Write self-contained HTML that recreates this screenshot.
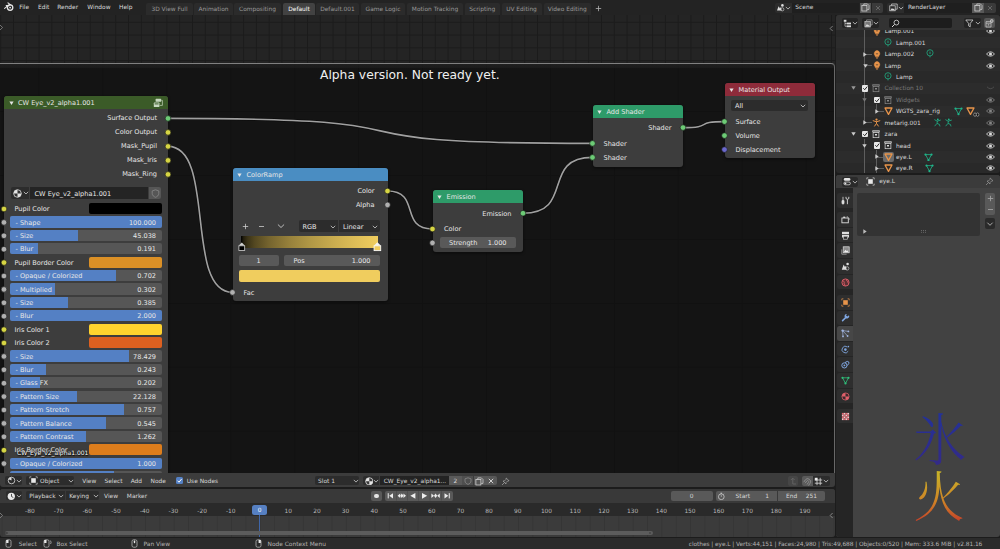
<!DOCTYPE html><html><head><meta charset='utf-8'><title>Blender</title><style>
html,body{margin:0;padding:0;background:#1c1c1c;}
body{width:1000px;height:549px;overflow:hidden;position:relative;font-family:"DejaVu Sans","Liberation Sans",sans-serif;font-size:5.9px;color:#d8d8d8;line-height:1;}
.a{position:absolute;white-space:nowrap;}
.t{position:absolute;white-space:nowrap;}
.tr{position:absolute;white-space:nowrap;transform:translateX(-100%);}
.tc{position:absolute;white-space:nowrap;transform:translateX(-50%);}
.node{position:absolute;border-radius:3px;background:#3d3d3d;box-shadow:0 0 0 0.6px #111,0 1px 3px rgba(0,0,0,.6);font-size:6.55px;color:#e6e6e6;}
.node .hd{position:absolute;left:0;top:0;right:0;height:13px;border-radius:3px 3px 0 0;}
.sock{position:absolute;width:5.6px;height:5.6px;border-radius:50%;transform:translate(-50%,-50%);box-shadow:0 0 0 0.5px #1a1a1a;}
.fld{position:absolute;border-radius:2px;background:#595959;}
.sl{position:absolute;border-radius:2px;background:#565656;overflow:hidden;}
.sl i{position:absolute;left:0;top:0;bottom:0;background:#5480c4;display:block;}
.sw{position:absolute;border-radius:2px;}
.dd{position:absolute;border-radius:2px;background:#2c2c2c;}
</style></head><body>
<div class='a' style='left:0;top:0;width:1000px;height:15px;background:#232323'></div>
<svg class='a' style='left:4.4px;top:2.4px' width='10' height='10' viewBox='0 0 10 10'><circle cx='6.1' cy='5.6' r='2.7' fill='none' stroke='#e6e6e6' stroke-width='1.3'/><circle cx='6.1' cy='5.6' r='0.9' fill='#e6e6e6'/><path d='M0.6 6.4 L5.4 2.6 M2.2 3.6 H5.2 M4 0.9 L6.6 2.9' stroke='#e6e6e6' stroke-width='1.1' stroke-linecap='round' fill='none'/></svg>
<div class='t' style='left:19.2px;top:5.00px;color:#dcdcdc'>File</div>
<div class='t' style='left:38px;top:5.00px;color:#dcdcdc'>Edit</div>
<div class='t' style='left:57.2px;top:5.00px;color:#dcdcdc'>Render</div>
<div class='t' style='left:87.3px;top:5.00px;color:#dcdcdc'>Window</div>
<div class='t' style='left:119px;top:5.00px;color:#dcdcdc'>Help</div>
<div class='a' style='left:146px;top:3px;width:47px;height:12px;background:#2b2b2b;border-radius:2px 2px 0 0'></div>
<div class='tc' style='left:169.5px;top:7.00px;color:#9a9a9a'>3D View Full</div>
<div class='a' style='left:194px;top:3px;width:39px;height:12px;background:#2b2b2b;border-radius:2px 2px 0 0'></div>
<div class='tc' style='left:213.5px;top:7.00px;color:#9a9a9a'>Animation</div>
<div class='a' style='left:234px;top:3px;width:47px;height:12px;background:#2b2b2b;border-radius:2px 2px 0 0'></div>
<div class='tc' style='left:257.5px;top:7.00px;color:#9a9a9a'>Compositing</div>
<div class='a' style='left:283px;top:3px;width:32px;height:12px;background:#424242;border-radius:2px 2px 0 0'></div>
<div class='tc' style='left:299.0px;top:7.00px;color:#ffffff'>Default</div>
<div class='a' style='left:316px;top:3px;width:43px;height:12px;background:#2b2b2b;border-radius:2px 2px 0 0'></div>
<div class='tc' style='left:337.5px;top:7.00px;color:#9a9a9a'>Default.001</div>
<div class='a' style='left:361px;top:3px;width:44px;height:12px;background:#2b2b2b;border-radius:2px 2px 0 0'></div>
<div class='tc' style='left:383.0px;top:7.00px;color:#9a9a9a'>Game Logic</div>
<div class='a' style='left:407px;top:3px;width:56px;height:12px;background:#2b2b2b;border-radius:2px 2px 0 0'></div>
<div class='tc' style='left:435.0px;top:7.00px;color:#9a9a9a'>Motion Tracking</div>
<div class='a' style='left:465px;top:3px;width:34.5px;height:12px;background:#2b2b2b;border-radius:2px 2px 0 0'></div>
<div class='tc' style='left:482.25px;top:7.00px;color:#9a9a9a'>Scripting</div>
<div class='a' style='left:501.5px;top:3px;width:40.0px;height:12px;background:#2b2b2b;border-radius:2px 2px 0 0'></div>
<div class='tc' style='left:521.5px;top:7.00px;color:#9a9a9a'>UV Editing</div>
<div class='a' style='left:543.5px;top:3px;width:47.5px;height:12px;background:#2b2b2b;border-radius:2px 2px 0 0'></div>
<div class='tc' style='left:567.25px;top:7.00px;color:#9a9a9a'>Video Editing</div>
<svg class='a' style='left:594.5px;top:5px' width='7' height='7' viewBox='0 0 7 7'><path d='M3.5 0.8 V6.2 M0.8 3.5 H6.2' stroke='#b0b0b0' stroke-width='0.8'/></svg>
<div class='a' style='left:0;top:15px;width:835px;height:458.3px;overflow:hidden;background-color:#242424;background-image:linear-gradient(to right,#1b1b1b 1px,transparent 1px),linear-gradient(to bottom,#1b1b1b 1px,transparent 1px);background-size:12.79px 12.79px;background-position:0.26px 6.8px'>
<div class='a' style='left:-6px;top:48.1px;width:838.7px;height:460px;border:1.2px solid #808080;border-right:1.4px solid #686868;border-radius:4px;background-color:#141414;background-image:linear-gradient(to bottom,rgba(40,40,40,0.55) 0,rgba(36,36,36,0.45) 3.6px,rgba(20,20,20,0) 4.6px),linear-gradient(to right,#111 1px,transparent 1px),linear-gradient(to bottom,#111 1px,transparent 1px);background-size:100% 100%,63.95px 63.95px,63.95px 63.95px;background-position:0 0,43.45px 47.05px,43.45px 47.05px'></div>
<div class='tc' style='left:409.8px;top:54.00px;font-size:12.3px;color:#f0f0f0'>Alpha version. Not ready yet.</div>
</div>
<svg class='a' style='left:0;top:0' width='1000' height='549' viewBox='0 0 1000 549'>
<path d='M168 118.4 C486.375 118.4 274.125 143.4 592.5 143.4' stroke='#0c0c0c' stroke-width='2.8' fill='none'/><path d='M168 118.4 C486.375 118.4 274.125 143.4 592.5 143.4' stroke='#a0a0a0' stroke-width='1.6' fill='none'/>
<path d='M168 146.4 C216.375 146.4 184.125 292.4 232.5 292.4' stroke='#0c0c0c' stroke-width='2.8' fill='none'/><path d='M168 146.4 C216.375 146.4 184.125 292.4 232.5 292.4' stroke='#a0a0a0' stroke-width='1.6' fill='none'/>
<path d='M387.5 191.0 C421.25 191.0 398.75 229.0 432.5 229.0' stroke='#0c0c0c' stroke-width='2.8' fill='none'/><path d='M387.5 191.0 C421.25 191.0 398.75 229.0 432.5 229.0' stroke='#a0a0a0' stroke-width='1.6' fill='none'/>
<path d='M523 213.20000000000002 C575.125 213.20000000000002 540.375 157.4 592.5 157.4' stroke='#0c0c0c' stroke-width='2.8' fill='none'/><path d='M523 213.20000000000002 C575.125 213.20000000000002 540.375 157.4 592.5 157.4' stroke='#a0a0a0' stroke-width='1.6' fill='none'/>
<path d='M683 127.60000000000001 C714.125 127.60000000000001 693.375 121.60000000000001 724.5 121.60000000000001' stroke='#0c0c0c' stroke-width='2.8' fill='none'/><path d='M683 127.60000000000001 C714.125 127.60000000000001 693.375 121.60000000000001 724.5 121.60000000000001' stroke='#a0a0a0' stroke-width='1.6' fill='none'/>
</svg>
<div class='node' style='left:4px;top:96px;width:164px;height:384px'><div class='hd' style='background:#3b5b28'></div><svg class='a' style='left:4.6px;top:4.6px' width='5' height='4.4' viewBox='0 0 5 4.4'><path d='M0.4 0.5 H4.6 L2.5 4 Z' fill='#e4e4e4'/></svg><div class='t' style='left:14px;top:4.00px;'>CW Eye_v2_alpha1.001</div>
<div class='tr' style='left:153px;top:19.00px;'>Surface Output</div>
<div class='tr' style='left:153px;top:33.00px;'>Color Output</div>
<div class='tr' style='left:153px;top:47.00px;'>Mask_Pupil</div>
<div class='tr' style='left:153px;top:61.00px;'>Mask_Iris</div>
<div class='tr' style='left:153px;top:75.00px;'>Mask_Ring</div>
<div class='dd' style='left:7.2px;top:91.4px;width:18.3px;height:11.6px;border-radius:2px 0 0 2px'></div>
<svg class='a' style='left:8.6px;top:92.7px' width='9' height='9' viewBox='0 0 9 9'><circle cx='4.5' cy='4.5' r='3.8' fill='#e4e4e4'/><path d='M4.5 4.5 L4.5 0.7 A3.8 3.8 0 0 1 8.3 4.5 Z' fill='#333'/><path d='M4.5 4.5 L0.7 4.5 A3.8 3.8 0 0 0 4.5 8.3 Z' fill='#333'/><circle cx='4.5' cy='4.5' r='3.8' fill='none' stroke='#e4e4e4' stroke-width='0.7'/></svg>
<svg class='a' style='left:17.5px;top:94.4px' width='8' height='6' viewBox='0 0 8 6'><path d='M1.8 1.8 L4 4 L6.2 1.8' stroke='#ccc' stroke-width='0.8' fill='none'/></svg>
<div class='dd' style='left:26px;top:91.4px;width:118.3px;height:11.6px;border-radius:0;background:#242424'></div>
<div class='t' style='left:30.5px;top:95.00px;'>CW Eye_v2_alpha1.001</div>
<div class='fld' style='left:144.8px;top:91.4px;width:12.5px;height:11.6px;border-radius:0 2px 2px 0;background:#565656'></div>
<svg class='a' style='left:146.6px;top:92.8px' width='9' height='9' viewBox='0 0 9 9'><path d='M4.5 0.8 L7.8 1.9 V4.4 C7.8 6.4 6.2 7.6 4.5 8.3 C2.8 7.6 1.2 6.4 1.2 4.4 V1.9 Z' fill='none' stroke='#8a8a8a' stroke-width='0.8'/></svg>
<svg class='a' style='left:149px;top:1.8px' width='10' height='10' viewBox='0 0 10 10'><rect x='2.6' y='0.8' width='5.6' height='3' rx='0.6' fill='#c8d8c0'/><rect x='0.8' y='4.6' width='5.6' height='4.4' rx='0.6' fill='#c8d8c0'/><path d='M8.4 2.4 H9.4 V7.4 H6.6' stroke='#c8d8c0' stroke-width='0.7' fill='none'/><rect x='1.6' y='5.4' width='4' height='1' fill='#3b5b28'/></svg>
<div class='t' style='left:10.5px;top:110.00px;'>Pupil Color</div>
<div class='sw' style='left:84.5px;top:107.0px;width:73px;height:11.2px;background:#000000'></div>
<div class='sl' style='left:6px;top:120.3px;width:152px;height:11.4px'><i style='width:152px'></i></div>
<div class='t' style='left:11.5px;top:124.00px;'>- Shape</div><div class='tr' style='left:152px;top:124.00px;'>100.000</div>
<div class='sl' style='left:6px;top:133.70000000000002px;width:152px;height:11.4px'><i style='width:67.5px'></i></div>
<div class='t' style='left:11.5px;top:137.00px;'>- Size</div><div class='tr' style='left:152px;top:137.00px;'>45.038</div>
<div class='sl' style='left:6px;top:147.10000000000002px;width:152px;height:11.4px'><i style='width:28px'></i></div>
<div class='t' style='left:11.5px;top:150.00px;'>- Blur</div><div class='tr' style='left:152px;top:150.00px;'>0.191</div>
<div class='t' style='left:10.5px;top:164.00px;'>Pupil Border Color</div>
<div class='sw' style='left:84.5px;top:160.6px;width:73px;height:11.2px;background:#db9026'></div>
<div class='sl' style='left:6px;top:173.9px;width:152px;height:11.4px'><i style='width:106px'></i></div>
<div class='t' style='left:11.5px;top:177.00px;'>- Opaque / Colorized</div><div class='tr' style='left:152px;top:177.00px;'>0.702</div>
<div class='sl' style='left:6px;top:187.3px;width:152px;height:11.4px'><i style='width:45px'></i></div>
<div class='t' style='left:11.5px;top:191.00px;'>- Multiplied</div><div class='tr' style='left:152px;top:191.00px;'>0.302</div>
<div class='sl' style='left:6px;top:200.7px;width:152px;height:11.4px'><i style='width:58px'></i></div>
<div class='t' style='left:11.5px;top:204.00px;'>- Size</div><div class='tr' style='left:152px;top:204.00px;'>0.385</div>
<div class='sl' style='left:6px;top:214.10000000000002px;width:152px;height:11.4px'><i style='width:152px'></i></div>
<div class='t' style='left:11.5px;top:217.00px;'>- Blur</div><div class='tr' style='left:152px;top:217.00px;'>2.000</div>
<div class='t' style='left:10.5px;top:231.00px;'>Iris Color 1</div>
<div class='sw' style='left:84.5px;top:227.6px;width:73px;height:11.2px;background:#ffd32e'></div>
<div class='t' style='left:10.5px;top:244.00px;'>Iris Color 2</div>
<div class='sw' style='left:84.5px;top:241.0px;width:73px;height:11.2px;background:#dd6020'></div>
<div class='sl' style='left:6px;top:254.3px;width:152px;height:11.4px'><i style='width:118.5px'></i></div>
<div class='t' style='left:11.5px;top:258.00px;'>- Size</div><div class='tr' style='left:152px;top:258.00px;'>78.429</div>
<div class='sl' style='left:6px;top:267.7px;width:152px;height:11.4px'><i style='width:35.8px'></i></div>
<div class='t' style='left:11.5px;top:271.00px;'>- Blur</div><div class='tr' style='left:152px;top:271.00px;'>0.243</div>
<div class='sl' style='left:6px;top:281.1px;width:152px;height:11.4px'><i style='width:30px'></i></div>
<div class='t' style='left:11.5px;top:284.00px;'>- Glass FX</div><div class='tr' style='left:152px;top:284.00px;'>0.202</div>
<div class='sl' style='left:6px;top:294.5px;width:152px;height:11.4px'><i style='width:66.5px'></i></div>
<div class='t' style='left:11.5px;top:298.00px;'>- Pattern Size</div><div class='tr' style='left:152px;top:298.00px;'>22.128</div>
<div class='sl' style='left:6px;top:307.90000000000003px;width:152px;height:11.4px'><i style='width:114px'></i></div>
<div class='t' style='left:11.5px;top:311.00px;'>- Pattern Stretch</div><div class='tr' style='left:152px;top:311.00px;'>0.757</div>
<div class='sl' style='left:6px;top:321.3px;width:152px;height:11.4px'><i style='width:95.8px'></i></div>
<div class='t' style='left:11.5px;top:325.00px;'>- Pattern Balance</div><div class='tr' style='left:152px;top:325.00px;'>0.545</div>
<div class='sl' style='left:6px;top:334.7px;width:152px;height:11.4px'><i style='width:75.8px'></i></div>
<div class='t' style='left:11.5px;top:338.00px;'>- Pattern Contrast</div><div class='tr' style='left:152px;top:338.00px;'>1.262</div>
<div class='t' style='left:10.5px;top:351.00px;'>Iris Border Color</div>
<div class='sw' style='left:84.5px;top:348.2px;width:73px;height:11.2px;background:#dd7d1c'></div>
<div class='sl' style='left:6px;top:361.5px;width:152px;height:11.4px'><i style='width:152px'></i></div>
<div class='t' style='left:11.5px;top:365.00px;'>- Opaque / Colorized</div><div class='tr' style='left:152px;top:365.00px;'>1.000</div>
<div class='sl' style='left:6px;top:374.90000000000003px;width:152px;height:11.4px'><i style='width:104px'></i></div>
<div class='t' style='left:11.5px;top:378.00px;'></div><div class='tr' style='left:152px;top:378.00px;'></div>
</div>
<div class='node' style='left:232.5px;top:168px;width:155.0px;height:132.5px'><div class='hd' style='background:#4a8dc2'></div><svg class='a' style='left:4.6px;top:4.6px' width='5' height='4.4' viewBox='0 0 5 4.4'><path d='M0.4 0.5 H4.6 L2.5 4 Z' fill='#e4e4e4'/></svg><div class='t' style='left:14px;top:4.00px;'>ColorRamp</div>
<div class='tr' style='left:142px;top:20.00px;'>Color</div><div class='tr' style='left:142px;top:34.00px;'>Alpha</div>
<svg class='a' style='left:9px;top:54.6px' width='7' height='7' viewBox='0 0 7 7'><path d='M3.5 0.8 V6.2 M0.8 3.5 H6.2' stroke='#ccc' stroke-width='0.8'/></svg><svg class='a' style='left:25.5px;top:54.6px' width='7' height='7' viewBox='0 0 7 7'><path d='M1 3.5 H6' stroke='#ccc' stroke-width='0.8'/></svg>
<svg class='a' style='left:44.5px;top:55.4px' width='8' height='6' viewBox='0 0 8 6'><path d='M0.9 1.5 L4 4.5 L7.1 1.5' stroke='#ccc' stroke-width='0.9' fill='none'/></svg>
<div class='dd' style='left:66px;top:52px;width:39.5px;height:12px;border-radius:2px 0 0 2px'></div><div class='dd' style='left:106px;top:52px;width:41.5px;height:12px;border-radius:0 2px 2px 0'></div>
<div class='t' style='left:70px;top:56.00px;'>RGB</div><div class='t' style='left:110.5px;top:56.00px;'>Linear</div>
<svg class='a' style='left:96px;top:55.5px' width='8' height='6' viewBox='0 0 8 6'><path d='M1.8 1.8 L4 4 L6.2 1.8' stroke='#ccc' stroke-width='0.8' fill='none'/></svg>
<svg class='a' style='left:138px;top:55.5px' width='8' height='6' viewBox='0 0 8 6'><path d='M1.8 1.8 L4 4 L6.2 1.8' stroke='#ccc' stroke-width='0.8' fill='none'/></svg>
<div class='a' style='left:8.5px;top:67.7px;width:137px;height:12.3px;background:linear-gradient(to right,rgb(0, 0, 0) 0%,rgb(36, 31, 14) 2%,rgb(59, 51, 23) 5%,rgb(84, 72, 33) 10%,rgb(116, 99, 46) 20%,rgb(150, 128, 59) 35%,rgb(176, 151, 69) 50%,rgb(205, 175, 80) 70%,rgb(223, 191, 88) 85%,rgb(240, 205, 94) 100%)'></div>
<svg class='a' style='left:5.5px;top:73.8px' width='146' height='10' viewBox='0 0 146 10'><path d='M0.6 3.8 L3.8 0.5 L7 3.8 Z' fill='#cfcfcf'/><rect x='0.9' y='3.8' width='5.8' height='4.6' fill='#000' stroke='#d4d4d4' stroke-width='0.8'/><path d='M135.8 3.8 L139.4 0.2 L143 3.8 Z' fill='#f4f4f4'/><rect x='136.1' y='3.8' width='6.6' height='4.8' fill='#f0cd5e' stroke='#fafafa' stroke-width='0.9'/></svg>
<div class='fld' style='left:6.5px;top:86.8px;width:40px;height:11.7px'></div><div class='tc' style='left:26px;top:90.00px;'>1</div>
<div class='fld' style='left:51.5px;top:86.8px;width:96px;height:11.7px'></div><div class='t' style='left:61px;top:90.00px;'>Pos</div><div class='tr' style='left:138px;top:90.00px;'>1.000</div>
<div class='sw' style='left:6.5px;top:102.4px;width:141px;height:11.6px;background:#f0cd5e'></div>
<div class='t' style='left:11px;top:122.00px;'>Fac</div>
</div>
<div class='node' style='left:432.5px;top:190.4px;width:90.5px;height:61.19999999999999px'><div class='hd' style='background:#2e9b69'></div><svg class='a' style='left:4.6px;top:4.6px' width='5' height='4.4' viewBox='0 0 5 4.4'><path d='M0.4 0.5 H4.6 L2.5 4 Z' fill='#e4e4e4'/></svg><div class='t' style='left:14px;top:3.60px;'>Emission</div>
<div class='tr' style='left:79px;top:20.60px;'>Emission</div><div class='t' style='left:11.5px;top:35.60px;'>Color</div>
<div class='fld' style='left:7.2px;top:46.4px;width:76px;height:11.5px'></div><div class='t' style='left:16.5px;top:49.60px;'>Strength</div><div class='tr' style='left:74px;top:49.60px;'>1.000</div>
</div>
<div class='node' style='left:592.5px;top:105px;width:90.5px;height:61.5px'><div class='hd' style='background:#2e9b69'></div><svg class='a' style='left:4.6px;top:4.6px' width='5' height='4.4' viewBox='0 0 5 4.4'><path d='M0.4 0.5 H4.6 L2.5 4 Z' fill='#e4e4e4'/></svg><div class='t' style='left:14px;top:4.00px;'>Add Shader</div>
<div class='tr' style='left:79px;top:20.00px;'>Shader</div><div class='t' style='left:11px;top:36.00px;'>Shader</div><div class='t' style='left:11px;top:50.00px;'>Shader</div>
</div>
<div class='node' style='left:724.5px;top:83px;width:90.5px;height:75px'><div class='hd' style='background:#8e2b3a'></div><svg class='a' style='left:4.6px;top:4.6px' width='5' height='4.4' viewBox='0 0 5 4.4'><path d='M0.4 0.5 H4.6 L2.5 4 Z' fill='#e4e4e4'/></svg><div class='t' style='left:14px;top:4.00px;'>Material Output</div>
<div class='dd' style='left:6.5px;top:17px;width:76.5px;height:11px'></div><div class='t' style='left:10.5px;top:20.00px;'>All</div>
<svg class='a' style='left:74px;top:20px' width='8' height='6' viewBox='0 0 8 6'><path d='M1.8 1.8 L4 4 L6.2 1.8' stroke='#ccc' stroke-width='0.8' fill='none'/></svg>
<div class='t' style='left:11px;top:36.00px;'>Surface</div><div class='t' style='left:11px;top:50.00px;'>Volume</div><div class='t' style='left:11px;top:64.00px;'>Displacement</div>
</div>
<svg class='a' style='left:0;top:0' width='835' height='473' viewBox='0 0 835 473'><circle cx='168' cy='118.40' r='2.8' fill='#6dcb76' stroke='#151515' stroke-width='0.6'/><circle cx='168' cy='132.40' r='2.8' fill='#d6d544' stroke='#151515' stroke-width='0.6'/><circle cx='168' cy='146.40' r='2.8' fill='#d6d544' stroke='#151515' stroke-width='0.6'/><circle cx='168' cy='160.40' r='2.8' fill='#d6d544' stroke='#151515' stroke-width='0.6'/><circle cx='168' cy='174.40' r='2.8' fill='#d6d544' stroke='#151515' stroke-width='0.6'/><circle cx='4' cy='209.00' r='2.8' fill='#d6d544' stroke='#151515' stroke-width='0.6'/><circle cx='4' cy='222.40' r='2.8' fill='#b0b0b0' stroke='#151515' stroke-width='0.6'/><circle cx='4' cy='235.80' r='2.8' fill='#b0b0b0' stroke='#151515' stroke-width='0.6'/><circle cx='4' cy='249.20' r='2.8' fill='#b0b0b0' stroke='#151515' stroke-width='0.6'/><circle cx='4' cy='262.60' r='2.8' fill='#d6d544' stroke='#151515' stroke-width='0.6'/><circle cx='4' cy='276.00' r='2.8' fill='#b0b0b0' stroke='#151515' stroke-width='0.6'/><circle cx='4' cy='289.40' r='2.8' fill='#b0b0b0' stroke='#151515' stroke-width='0.6'/><circle cx='4' cy='302.80' r='2.8' fill='#b0b0b0' stroke='#151515' stroke-width='0.6'/><circle cx='4' cy='316.20' r='2.8' fill='#b0b0b0' stroke='#151515' stroke-width='0.6'/><circle cx='4' cy='329.60' r='2.8' fill='#d6d544' stroke='#151515' stroke-width='0.6'/><circle cx='4' cy='343.00' r='2.8' fill='#d6d544' stroke='#151515' stroke-width='0.6'/><circle cx='4' cy='356.40' r='2.8' fill='#b0b0b0' stroke='#151515' stroke-width='0.6'/><circle cx='4' cy='369.80' r='2.8' fill='#b0b0b0' stroke='#151515' stroke-width='0.6'/><circle cx='4' cy='383.20' r='2.8' fill='#b0b0b0' stroke='#151515' stroke-width='0.6'/><circle cx='4' cy='396.60' r='2.8' fill='#b0b0b0' stroke='#151515' stroke-width='0.6'/><circle cx='4' cy='410.00' r='2.8' fill='#b0b0b0' stroke='#151515' stroke-width='0.6'/><circle cx='4' cy='423.40' r='2.8' fill='#b0b0b0' stroke='#151515' stroke-width='0.6'/><circle cx='4' cy='436.80' r='2.8' fill='#b0b0b0' stroke='#151515' stroke-width='0.6'/><circle cx='4' cy='450.20' r='2.8' fill='#d6d544' stroke='#151515' stroke-width='0.6'/><circle cx='4' cy='463.60' r='2.8' fill='#b0b0b0' stroke='#151515' stroke-width='0.6'/><circle cx='387.5' cy='191.00' r='2.8' fill='#d6d544' stroke='#151515' stroke-width='0.6'/><circle cx='387.5' cy='204.90' r='2.8' fill='#b0b0b0' stroke='#151515' stroke-width='0.6'/><circle cx='232.5' cy='292.40' r='2.8' fill='#b0b0b0' stroke='#151515' stroke-width='0.6'/><circle cx='523' cy='213.20' r='2.8' fill='#6dcb76' stroke='#151515' stroke-width='0.6'/><circle cx='432.5' cy='229.00' r='2.8' fill='#d6d544' stroke='#151515' stroke-width='0.6'/><circle cx='432.5' cy='242.90' r='2.8' fill='#b0b0b0' stroke='#151515' stroke-width='0.6'/><circle cx='683' cy='127.60' r='2.8' fill='#6dcb76' stroke='#151515' stroke-width='0.6'/><circle cx='592.5' cy='143.40' r='2.8' fill='#6dcb76' stroke='#151515' stroke-width='0.6'/><circle cx='592.5' cy='157.40' r='2.8' fill='#6dcb76' stroke='#151515' stroke-width='0.6'/><circle cx='724.5' cy='121.60' r='2.8' fill='#6dcb76' stroke='#151515' stroke-width='0.6'/><circle cx='724.5' cy='135.60' r='2.8' fill='#6dcb76' stroke='#151515' stroke-width='0.6'/><circle cx='724.5' cy='149.60' r='2.8' fill='#6a68cc' stroke='#151515' stroke-width='0.6'/></svg>
<div class='t' style='left:17px;top:450.00px;font-size:6px;color:#fff;text-shadow:0 0 1.5px #000,0.5px 0.5px 1px #000'>CW_Eye_v2_alpha1.001</div>
<div class='a' style='left:0px;top:473px;width:835px;height:16px;background:#1c1c1c;border-radius:0;'></div>
<div class='a' style='left:0px;top:473.3px;width:835px;height:13.699999999999989px;background:#3c3c3c;border-radius:0 0 3px 3px;'></div>
<div class='a' style='left:5.3px;top:475.7px;width:16.5px;height:9.699999999999989px;background:#2c2c2c;border-radius:2px;'></div>
<svg class='a' style='left:6.5px;top:476px' width='9' height='9' viewBox='0 0 9 9'><circle cx='4.5' cy='4.5' r='3.3' fill='none' stroke='#ddd' stroke-width='0.8'/><path d='M4.5 1.2 A3.3 3.3 0 0 0 1.5 3.2 L4.5 4.5 Z' fill='#ddd'/></svg>
<svg class='a' style='left:14.5px;top:477.6px' width='8' height='6' viewBox='0 0 8 6'><path d='M1.7999999999999998 1.9 L4 4.1 L6.2 1.9' stroke='#ccc' stroke-width='0.8' fill='none'/></svg>
<div class='a' style='left:26.3px;top:475.7px;width:48.2px;height:9.699999999999989px;background:#2c2c2c;border-radius:2px;'></div>
<svg class='a' style='left:28.5px;top:476.3px' width='9' height='9' viewBox='0 0 9 9'><rect x='2.2' y='2.2' width='4.6' height='4.6' fill='#e8e8e8'/><path d='M0.8 2.4 V0.8 H2.4 M6.6 0.8 H8.2 V2.4 M8.2 6.6 V8.2 H6.6 M2.4 8.2 H0.8 V6.6' stroke='#ccc' stroke-width='0.7' fill='none'/></svg>
<div class='t' style='left:40px;top:479.00px;color:#d8d8d8;'>Object</div>
<svg class='a' style='left:67px;top:477.6px' width='8' height='6' viewBox='0 0 8 6'><path d='M1.7999999999999998 1.9 L4 4.1 L6.2 1.9' stroke='#ccc' stroke-width='0.8' fill='none'/></svg>
<div class='t' style='left:82.3px;top:479.00px;color:#d8d8d8;'>View</div>
<div class='t' style='left:104.5px;top:479.00px;color:#d8d8d8;'>Select</div>
<div class='t' style='left:130.7px;top:479.00px;color:#d8d8d8;'>Add</div>
<div class='t' style='left:150.5px;top:479.00px;color:#d8d8d8;'>Node</div>
<div class='a' style='left:175.8px;top:477px;width:7.199999999999989px;height:7.199999999999989px;background:#5480c4;border-radius:1.5px;'></div>
<svg class='a' style='left:175.8px;top:477px' width='7.2' height='7.2' viewBox='0 0 7.2 7.2'><path d='M1.6 3.7 L3 5.2 L5.7 1.9' stroke='#fff' stroke-width='1' fill='none'/></svg>
<div class='t' style='left:186.8px;top:479.00px;color:#d8d8d8;'>Use Nodes</div>
<div class='a' style='left:314.5px;top:476.2px;width:44.80000000000001px;height:9.300000000000011px;background:#2c2c2c;border-radius:2px;'></div>
<div class='t' style='left:318px;top:479.00px;color:#d8d8d8;'>Slot 1</div>
<svg class='a' style='left:351.5px;top:477.8px' width='8' height='6' viewBox='0 0 8 6'><path d='M1.7999999999999998 1.9 L4 4.1 L6.2 1.9' stroke='#ccc' stroke-width='0.8' fill='none'/></svg>
<div class='a' style='left:363px;top:476.2px;width:16.30000000000001px;height:9.300000000000011px;background:#2c2c2c;border-radius:2px 0 0 2px;'></div>
<svg class='a' style='left:364.8px;top:476.6px' width='8.6' height='8.6' viewBox='0 0 9 9'><circle cx='4.5' cy='4.5' r='3.8' fill='#e4e4e4'/><path d='M4.5 4.5 L4.5 0.7 A3.8 3.8 0 0 1 8.3 4.5 Z' fill='#3a3a3a'/><path d='M4.5 4.5 L0.7 4.5 A3.8 3.8 0 0 0 4.5 8.3 Z' fill='#3a3a3a'/><circle cx='4.5' cy='4.5' r='3.8' fill='none' stroke='#e4e4e4' stroke-width='0.7'/></svg>
<svg class='a' style='left:372px;top:477.8px' width='8' height='6' viewBox='0 0 8 6'><path d='M1.7999999999999998 1.9 L4 4.1 L6.2 1.9' stroke='#ccc' stroke-width='0.8' fill='none'/></svg>
<div class='a' style='left:379.6px;top:476.2px;width:69.19999999999999px;height:9.300000000000011px;background:#232323;border-radius:0;'></div>
<div class='t' style='left:383.7px;top:479.00px;color:#d8d8d8;'>CW_Eye_v2_alpha1...</div>
<div class='a' style='left:449px;top:476.2px;width:12.600000000000023px;height:9.300000000000011px;background:#5a5a5a;border-radius:0;'></div>
<div class='tc' style='left:455.3px;top:479.00px;color:#d8d8d8;'>2</div>
<div class='a' style='left:462px;top:476.2px;width:11.199999999999989px;height:9.300000000000011px;background:#4f4f4f;border-radius:0;'></div>
<svg class='a' style='left:463.6px;top:476.8px' width='8' height='8' viewBox='0 0 8 8'><path d='M4 0.8 L7 1.8 V4 C7 5.8 5.5 6.8 4 7.4 C2.5 6.8 1 5.8 1 4 V1.8 Z' fill='none' stroke='#909090' stroke-width='0.7'/></svg>
<div class='a' style='left:473.6px;top:476.2px;width:11.399999999999977px;height:9.300000000000011px;background:#585858;border-radius:0;'></div>
<svg class='a' style='left:475px;top:476.6px' width='9' height='9' viewBox='0 0 9 9'><rect x='0.9' y='2.6' width='5' height='5.4' fill='none' stroke='#ddd' stroke-width='0.7'/><path d='M2.8 2.4 V0.9 H6.4 L8 2.5 V6.4 H6.2' fill='none' stroke='#ddd' stroke-width='0.7'/></svg>
<div class='a' style='left:485.4px;top:476.2px;width:11.600000000000023px;height:9.300000000000011px;background:#585858;border-radius:0 2px 2px 0;'></div>
<svg class='a' style='left:487.2px;top:476.9px' width='8' height='8' viewBox='0 0 8 8'><path d='M1.8 1.8 L6.2 6.2 M6.2 1.8 L1.8 6.2' stroke='#ddd' stroke-width='0.9'/></svg>
<svg class='a' style='left:501px;top:476.5px' width='9' height='9' viewBox='0 0 9 9'><path d='M5.2 1 L8 3.8 L6.6 4 L5 5.6 L5 7 L2 4 L3.4 4 L5 2.4 Z M3.4 5.6 L1 8' fill='none' stroke='#aaa' stroke-width='0.7'/></svg>
<div class='a' style='left:788.3px;top:476px;width:9.700000000000045px;height:9.600000000000023px;background:#464646;border-radius:2px;'></div>
<svg class='a' style='left:789px;top:476.6px' width='8.5' height='8.5' viewBox='0 0 9 9'><path d='M2 3.2 L4 1.2 L6 3.2 M4 1.4 V7.4 H7.4' stroke='#6a6a6a' stroke-width='0.8' fill='none'/></svg>
<div class='a' style='left:802px;top:476px;width:10.600000000000023px;height:9.600000000000023px;background:#5a5a5a;border-radius:2px 0 0 2px;'></div>
<svg class='a' style='left:803px;top:476.5px' width='9' height='9' viewBox='0 0 9 9'><path d='M1.8 7.2 L1.8 4.5 A2.9 2.9 0 0 1 7.6 4.5 L7.6 7.2 M3.6 7.2 L3.6 4.6 A1.1 1.1 0 0 1 5.8 4.6 L5.8 7.2' transform='rotate(35 4.5 4.5)' stroke='#8c8c8c' stroke-width='0.9' fill='none'/></svg>
<div class='a' style='left:812.8px;top:476px;width:16.800000000000068px;height:9.600000000000023px;background:#2c2c2c;border-radius:0 2px 2px 0;'></div>
<svg class='a' style='left:814px;top:476.5px' width='9' height='9' viewBox='0 0 9 9'><path d='M3 0.8 V8.2 M6.2 0.8 V8.2 M0.8 3 H8.2 M0.8 6.2 H8.2' stroke='#ddd' stroke-width='0.8'/><rect x='0.8' y='0.8' width='2.6' height='2.6' fill='#eee'/></svg>
<svg class='a' style='left:822px;top:477.8px' width='8' height='6' viewBox='0 0 8 6'><path d='M1.7999999999999998 1.9 L4 4.1 L6.2 1.9' stroke='#ccc' stroke-width='0.8' fill='none'/></svg>
<div class='a' style='left:0px;top:489px;width:835px;height:48px;background:#3b3b3b;border-radius:3px;'></div>
<div class='a' style='left:0px;top:489px;width:835px;height:13.699999999999989px;background:#393939;border-radius:3px 3px 0 0;'></div>
<div class='a' style='left:0px;top:502.7px;width:835px;height:13.500000000000057px;background:#2a2a2a;border-radius:0;'></div>
<div class='a' style='left:0;top:516.2px;width:835px;height:20.8px;border-radius:0 0 3px 3px;background-image:linear-gradient(to right,#353535 1px,transparent 1px);background-size:14.35px 100%;background-position:1.6px 0'></div>
<div class='a' style='left:5.5px;top:491.3px;width:16.3px;height:9.099999999999966px;background:#2c2c2c;border-radius:2px;'></div>
<svg class='a' style='left:6.8px;top:491.6px' width='8.6' height='8.6' viewBox='0 0 9 9'><circle cx='4.5' cy='4.5' r='3.8' fill='#e8e8e8'/><path d='M4.7 2 V4.7 L6.6 5.8' stroke='#333' stroke-width='0.9' fill='none'/><path d='M4.5 4.5 L4.5 0.7 A3.8 3.8 0 0 1 8.3 4.5 Z' fill='#3c3c3c' opacity='0'/></svg>
<svg class='a' style='left:14.600000000000001px;top:493px' width='8' height='6' viewBox='0 0 8 6'><path d='M1.7999999999999998 1.9 L4 4.1 L6.2 1.9' stroke='#ccc' stroke-width='0.8' fill='none'/></svg>
<div class='a' style='left:26.3px;top:491.3px;width:38.60000000000001px;height:9.099999999999966px;background:#2c2c2c;border-radius:2px 0 0 2px;'></div>
<div class='t' style='left:29.3px;top:494.00px;color:#d8d8d8;'>Playback</div>
<svg class='a' style='left:57px;top:493px' width='8' height='6' viewBox='0 0 8 6'><path d='M1.7999999999999998 1.9 L4 4.1 L6.2 1.9' stroke='#ccc' stroke-width='0.8' fill='none'/></svg>
<div class='a' style='left:65.5px;top:491.3px;width:33.3px;height:9.099999999999966px;background:#2c2c2c;border-radius:0 2px 2px 0;'></div>
<div class='t' style='left:69.3px;top:494.00px;color:#d8d8d8;'>Keying</div>
<svg class='a' style='left:91.7px;top:493px' width='8' height='6' viewBox='0 0 8 6'><path d='M1.7999999999999998 1.9 L4 4.1 L6.2 1.9' stroke='#ccc' stroke-width='0.8' fill='none'/></svg>
<div class='t' style='left:104px;top:494.00px;color:#d8d8d8;'>View</div>
<div class='t' style='left:126.8px;top:494.00px;color:#d8d8d8;'>Marker</div>
<div class='a' style='left:371.3px;top:491.2px;width:10.5px;height:9.600000000000023px;background:#595959;border-radius:2px;'></div>
<div class='a' style='left:374.2px;top:493.6px;width:4.8px;height:4.8px;border-radius:50%;background:#e6e6e6'></div>
<div class='a' style='left:385px;top:491.2px;width:67.5px;height:9.600000000000023px;background:#595959;border-radius:2px;'></div>
<svg class='a' style='left:385px;top:491.2px' width='67.5' height='9.6' viewBox='0 0 67.5 9.6'><rect x='11.0' y='0' width='0.5' height='9.6' fill='#444'/><rect x='22.25' y='0' width='0.5' height='9.6' fill='#444'/><rect x='33.5' y='0' width='0.5' height='9.6' fill='#444'/><rect x='44.75' y='0' width='0.5' height='9.6' fill='#444'/><rect x='56.0' y='0' width='0.5' height='9.6' fill='#444'/><path d='M3.2 2.2 V7.4' stroke='#ededed' stroke-width='1'/><path d='M8 2.2 V7.4 L4.2 4.8 Z' fill='#ededed'/><path d='M12.6 4.8 L15.2 2.6 V7 Z M21 4.8 L18.4 2.6 V7 Z' fill='#ededed' /><path d='M16.8 2.6 L18.4 4.8 L16.8 7 L15.2 4.8 Z' fill='#ededed'/><path d='M30.4 1.9 V7.7 L25.3 4.8 Z' fill='#ededed'/><path d='M37 1.9 V7.7 L42.2 4.8 Z' fill='#ededed'/><path d='M46.4 2.6 V7 L49 4.8 Z M54.8 2.6 V7 L52.2 4.8 Z' fill='#ededed' /><path d='M50.6 2.6 L52.2 4.8 L50.6 7 L49 4.8 Z' fill='#ededed'/><path d='M64.3 2.2 V7.4' stroke='#ededed' stroke-width='1'/><path d='M59.5 2.2 V7.4 L63.3 4.8 Z' fill='#ededed'/></svg>
<div class='a' style='left:671px;top:491px;width:41.5px;height:9.600000000000023px;background:#595959;border-radius:2px;'></div>
<div class='tc' style='left:691.7px;top:494.00px;color:#d8d8d8;'>0</div>
<div class='a' style='left:716px;top:491px;width:11px;height:9.600000000000023px;background:#595959;border-radius:2px 0 0 2px;'></div>
<svg class='a' style='left:717.2px;top:491.6px' width='8.6' height='8.6' viewBox='0 0 9 9'><circle cx='4.5' cy='5' r='3' fill='none' stroke='#ddd' stroke-width='0.7'/><path d='M4.5 3.4 V5 M3.6 1.2 H5.4 M4.5 1.2 V2 M6.9 2.4 L7.5 1.8' stroke='#ddd' stroke-width='0.7'/></svg>
<div class='a' style='left:727.3px;top:491px;width:50.200000000000045px;height:9.600000000000023px;background:#595959;border-radius:0;'></div>
<div class='t' style='left:735.6px;top:494.00px;color:#d8d8d8;'>Start</div>
<div class='tc' style='left:767px;top:494.00px;color:#d8d8d8;'>1</div>
<div class='a' style='left:778px;top:491px;width:47px;height:9.600000000000023px;background:#595959;border-radius:0 2px 2px 0;'></div>
<div class='t' style='left:786px;top:494.00px;color:#d8d8d8;'>End</div>
<div class='tr' style='left:817px;top:494.00px;color:#d8d8d8;'>251</div>
<div class='tc' style='left:29.900000000000006px;top:509.00px;color:#b8b8b8;'>-80</div>
<div class='tc' style='left:58.599999999999994px;top:509.00px;color:#b8b8b8;'>-70</div>
<div class='tc' style='left:87.30000000000001px;top:509.00px;color:#b8b8b8;'>-60</div>
<div class='tc' style='left:116.0px;top:509.00px;color:#b8b8b8;'>-50</div>
<div class='tc' style='left:144.7px;top:509.00px;color:#b8b8b8;'>-40</div>
<div class='tc' style='left:173.4px;top:509.00px;color:#b8b8b8;'>-30</div>
<div class='tc' style='left:202.1px;top:509.00px;color:#b8b8b8;'>-20</div>
<div class='tc' style='left:230.8px;top:509.00px;color:#b8b8b8;'>-10</div>
<div class='tc' style='left:288.2px;top:509.00px;color:#b8b8b8;'>10</div>
<div class='tc' style='left:316.9px;top:509.00px;color:#b8b8b8;'>20</div>
<div class='tc' style='left:345.6px;top:509.00px;color:#b8b8b8;'>30</div>
<div class='tc' style='left:374.3px;top:509.00px;color:#b8b8b8;'>40</div>
<div class='tc' style='left:403.0px;top:509.00px;color:#b8b8b8;'>50</div>
<div class='tc' style='left:431.7px;top:509.00px;color:#b8b8b8;'>60</div>
<div class='tc' style='left:460.4px;top:509.00px;color:#b8b8b8;'>70</div>
<div class='tc' style='left:489.1px;top:509.00px;color:#b8b8b8;'>80</div>
<div class='tc' style='left:517.8px;top:509.00px;color:#b8b8b8;'>90</div>
<div class='tc' style='left:546.5px;top:509.00px;color:#b8b8b8;'>100</div>
<div class='tc' style='left:575.2px;top:509.00px;color:#b8b8b8;'>110</div>
<div class='tc' style='left:603.9px;top:509.00px;color:#b8b8b8;'>120</div>
<div class='tc' style='left:632.5999999999999px;top:509.00px;color:#b8b8b8;'>130</div>
<div class='tc' style='left:661.3px;top:509.00px;color:#b8b8b8;'>140</div>
<div class='tc' style='left:690.0px;top:509.00px;color:#b8b8b8;'>150</div>
<div class='tc' style='left:718.7px;top:509.00px;color:#b8b8b8;'>160</div>
<div class='tc' style='left:747.4px;top:509.00px;color:#b8b8b8;'>170</div>
<div class='tc' style='left:776.1px;top:509.00px;color:#b8b8b8;'>180</div>
<div class='tc' style='left:804.8px;top:509.00px;color:#b8b8b8;'>190</div>
<div class='a' style='left:258.7px;top:514px;width:1.6999999999999886px;height:23px;background:#3f66a8;border-radius:0;'></div>
<div class='a' style='left:252px;top:504.6px;width:15px;height:10.0px;background:#5680c2;border-radius:2.5px;'></div>
<div class='tc' style='left:259.5px;top:508.00px;color:#fff;'>0</div>
<div class='a' style='left:4.5px;top:531.2px;width:648.0px;height:4.199999999999932px;background:#5c5c5c;border-radius:2.2px;'></div>
<div class='a' style='left:5.4px;top:532.2px;width:2.2px;height:2.2px;border-radius:50%;background:#444'></div><div class='a' style='left:649px;top:532.2px;width:2.2px;height:2.2px;border-radius:50%;background:#444'></div>
<div class='a' style='left:0px;top:538px;width:1000px;height:11px;background:#2b2b2b;border-radius:0;'></div>
<svg class='a' style='left:5.4px;top:539.4px' width='10' height='9' viewBox='0 0 10 9'><rect x='1' y='0.8' width='5' height='7.4' rx='1.6' fill='none' stroke='#c8c8c8' stroke-width='0.7'/><rect x='1.2' y='1' width='2.3' height='3' fill='#e8e8e8'/></svg>
<div class='t' style='left:18.7px;top:542.00px;color:#b4b4b4;'>Select</div>
<svg class='a' style='left:42.6px;top:539.4px' width='10' height='9' viewBox='0 0 10 9'><rect x='1' y='0.8' width='5' height='7.4' rx='1.6' fill='none' stroke='#c8c8c8' stroke-width='0.7'/><rect x='1.2' y='1' width='2.3' height='3' fill='#e8e8e8'/><path d='M7.3 1.5 Q8.8 3 7.6 5' stroke='#c8c8c8' stroke-width='0.7' fill='none'/></svg>
<div class='t' style='left:56.5px;top:542.00px;color:#b4b4b4;'>Box Select</div>
<svg class='a' style='left:130.6px;top:539.4px' width='10' height='9' viewBox='0 0 10 9'><rect x='1' y='0.8' width='5' height='7.4' rx='1.6' fill='none' stroke='#c8c8c8' stroke-width='0.7'/><rect x='2.8' y='1.6' width='1.4' height='2.6' rx='0.6' fill='#e8e8e8'/></svg>
<div class='t' style='left:143.5px;top:542.00px;color:#b4b4b4;'>Pan View</div>
<svg class='a' style='left:254.6px;top:539.4px' width='10' height='9' viewBox='0 0 10 9'><rect x='1' y='0.8' width='5' height='7.4' rx='1.6' fill='none' stroke='#c8c8c8' stroke-width='0.7'/><rect x='3.6' y='1' width='2.2' height='3' fill='#e8e8e8'/></svg>
<div class='t' style='left:267.5px;top:542.00px;color:#b4b4b4;'>Node Context Menu</div>
<div class='t' style='left:688.8px;top:542.00px;color:#b4b4b4;letter-spacing:-0.075px'>clothes | eye.L | Verts:44,151 | Faces:24,980 | Tris:49,688 | Objects:0/520 | Mem: 333.6 MiB | v2.81.16</div>
<div class='a' style='left:774.5px;top:2.5px;width:17.0px;height:10.0px;background:#2c2c2c;border-radius:2px 0 0 2px;'></div>
<svg class='a' style='left:776px;top:3px' width='9' height='9' viewBox='0 0 9 9'><path d='M1 7.6 L2.6 3.2 L4 5.4 L4.8 4 L5.6 7.6 Z' fill='#ddd'/><circle cx='6.4' cy='2.4' r='1.3' fill='#ddd'/><circle cx='6.3' cy='6.3' r='1.6' fill='none' stroke='#ddd' stroke-width='0.6'/></svg>
<svg class='a' style='left:784px;top:4.6px' width='8' height='6' viewBox='0 0 8 6'><path d='M1.7999999999999998 1.9 L4 4.1 L6.2 1.9' stroke='#ccc' stroke-width='0.8' fill='none'/></svg>
<div class='a' style='left:791.8px;top:2.5px;width:67.70000000000005px;height:10.0px;background:#1f1f1f;border-radius:0;'></div>
<div class='t' style='left:795.3px;top:5.00px;color:#d8d8d8;'>Scene</div>
<div class='a' style='left:859.8px;top:2.5px;width:11.700000000000045px;height:10.0px;background:#585858;border-radius:0;'></div>
<svg class='a' style='left:861px;top:3px' width='9' height='9' viewBox='0 0 9 9'><rect x='0.9' y='2.6' width='5' height='5.4' fill='none' stroke='#ddd' stroke-width='0.7'/><path d='M2.8 2.4 V0.9 H6.4 L8 2.5 V6.4 H6.2' fill='none' stroke='#ddd' stroke-width='0.7'/></svg>
<div class='a' style='left:871.8px;top:2.5px;width:11.700000000000045px;height:10.0px;background:#3a3a3a;border-radius:0 2px 2px 0;'></div>
<svg class='a' style='left:873.6px;top:3.5px' width='8' height='8' viewBox='0 0 8 8'><path d='M2 2 L6 6 M6 2 L2 6' stroke='#6a6a6a' stroke-width='0.9'/></svg>
<div class='a' style='left:887px;top:2.5px;width:17px;height:10.0px;background:#2c2c2c;border-radius:2px 0 0 2px;'></div>
<svg class='a' style='left:888.5px;top:3px' width='9' height='9' viewBox='0 0 9 9'><rect x='0.8' y='2.8' width='5.4' height='5' fill='none' stroke='#ddd' stroke-width='0.7'/><path d='M2.6 2.6 V1 H8.2 V6.2 H6.4' fill='none' stroke='#ddd' stroke-width='0.7'/><path d='M1.4 7.2 L3 5 L4 6.2 L4.8 5.4 L5.8 7.2 Z' fill='#ddd'/></svg>
<svg class='a' style='left:896.5px;top:4.6px' width='8' height='6' viewBox='0 0 8 6'><path d='M1.7999999999999998 1.9 L4 4.1 L6.2 1.9' stroke='#ccc' stroke-width='0.8' fill='none'/></svg>
<div class='a' style='left:904.3px;top:2.5px;width:67.70000000000005px;height:10.0px;background:#1f1f1f;border-radius:0;'></div>
<div class='t' style='left:908px;top:5.00px;color:#d8d8d8;'>RenderLayer</div>
<div class='a' style='left:972.3px;top:2.5px;width:11.700000000000045px;height:10.0px;background:#585858;border-radius:0;'></div>
<svg class='a' style='left:973.6px;top:3px' width='9' height='9' viewBox='0 0 9 9'><rect x='0.9' y='2.6' width='5' height='5.4' fill='none' stroke='#ddd' stroke-width='0.7'/><path d='M2.8 2.4 V0.9 H6.4 L8 2.5 V6.4 H6.2' fill='none' stroke='#ddd' stroke-width='0.7'/></svg>
<div class='a' style='left:984.3px;top:2.5px;width:11.700000000000045px;height:10.0px;background:#3a3a3a;border-radius:0 2px 2px 0;'></div>
<svg class='a' style='left:986.2px;top:3.5px' width='8' height='8' viewBox='0 0 8 8'><path d='M2 2 L6 6 M6 2 L2 6' stroke='#6a6a6a' stroke-width='0.9'/></svg>
<div class='a' style='left:836px;top:15px;width:164px;height:158px;background:#292929;border-radius:3px;'></div>
<div class='a' style='left:836px;top:37.01px;width:164px;height:11.420000000000002px;background:#2c2c2c;border-radius:0;'></div>
<div class='a' style='left:836px;top:59.85px;width:164px;height:11.419999999999995px;background:#2c2c2c;border-radius:0;'></div>
<div class='a' style='left:836px;top:82.69000000000001px;width:164px;height:11.419999999999987px;background:#2c2c2c;border-radius:0;'></div>
<div class='a' style='left:836px;top:105.53px;width:164px;height:11.419999999999987px;background:#2c2c2c;border-radius:0;'></div>
<div class='a' style='left:836px;top:128.37px;width:164px;height:11.420000000000016px;background:#2c2c2c;border-radius:0;'></div>
<div class='a' style='left:836px;top:151.21px;width:164px;height:11.420000000000016px;background:#2c2c2c;border-radius:0;'></div>
<div class='a' style='left:864.4px;top:30px;width:0.7000000000000455px;height:92.66px;background:#5e5e5e;border-radius:0;'></div>
<div class='a' style='left:876.1px;top:103.82px;width:0.6999999999999318px;height:7.420000000000002px;background:#5e5e5e;border-radius:0;'></div>
<div class='a' style='left:864.4px;top:139.08px;width:0.7000000000000455px;height:33.91999999999999px;background:#5e5e5e;border-radius:0;'></div>
<div class='a' style='left:876.1px;top:149.5px;width:0.6999999999999318px;height:23.5px;background:#5e5e5e;border-radius:0;'></div>
<svg class='a' style='left:872.7px;top:26.8px' width='8' height='9' viewBox='0 0 8 9'><path d='M4 0.6 A3 3 0 0 1 6 5.6 L5.6 6.6 H2.4 L2 5.6 A3 3 0 0 1 4 0.6 Z M2.8 7.4 H5.2 M3.2 8.4 H4.8' fill='#e8944a' stroke='#e8944a' stroke-width='0.6'/><path d='M3 3 L4 4.4 L5 3' stroke='#2a2a2a' stroke-width='0.5' fill='none'/></svg>
<div class='t' style='left:884.7px;top:29.00px;color:#d8d8d8;'>Lamp.001</div>
<svg class='a' style='left:985.9px;top:28.3px' width='9' height='6' viewBox='0 0 9 6'><path d='M0.5 3 Q4.5 -1.4 8.5 3 Q4.5 7.4 0.5 3 Z' fill='none' stroke='#ddd' stroke-width='0.8'/><circle cx='4.5' cy='3' r='1.5' fill='#ddd'/></svg>
<svg class='a' style='left:883.8px;top:38.22px' width='8' height='9' viewBox='0 0 8 9'><circle cx='4' cy='3.8' r='3.1' fill='none' stroke='#20b58a' stroke-width='0.75'/><path d='M4 2.6 V5 M4 7 V8.4' stroke='#20b58a' stroke-width='0.8'/></svg>
<div class='t' style='left:896px;top:41.00px;color:#d8d8d8;'>Lamp.001</div>
<div class='a' style='left:865px;top:53.79px;width:7px;height:0.7000000000000028px;background:#5e5e5e;border-radius:0;'></div>
<svg class='a' style='left:863.4px;top:51.64px' width='4' height='5' viewBox='0 0 4 5'><path d='M0.3 0.3 L3.7 2.5 L0.3 4.7 Z' fill='#ccc'/></svg>
<svg class='a' style='left:872.7px;top:49.64px' width='8' height='9' viewBox='0 0 8 9'><path d='M4 0.6 A3 3 0 0 1 6 5.6 L5.6 6.6 H2.4 L2 5.6 A3 3 0 0 1 4 0.6 Z M2.8 7.4 H5.2 M3.2 8.4 H4.8' fill='#e8944a' stroke='#e8944a' stroke-width='0.6'/><path d='M3 3 L4 4.4 L5 3' stroke='#2a2a2a' stroke-width='0.5' fill='none'/></svg>
<div class='t' style='left:884.7px;top:52.00px;color:#d8d8d8;'>Lamp.002</div>
<svg class='a' style='left:926px;top:49.04px' width='8' height='9' viewBox='0 0 8 9'><circle cx='4' cy='3.8' r='3.1' fill='none' stroke='#20b58a' stroke-width='0.75'/><path d='M4 2.6 V5 M4 7 V8.4' stroke='#20b58a' stroke-width='0.8'/></svg>
<svg class='a' style='left:985.9px;top:51.14px' width='9' height='6' viewBox='0 0 9 6'><path d='M0.5 3 Q4.5 -1.4 8.5 3 Q4.5 7.4 0.5 3 Z' fill='none' stroke='#ddd' stroke-width='0.8'/><circle cx='4.5' cy='3' r='1.5' fill='#ddd'/></svg>
<div class='a' style='left:865px;top:65.21000000000001px;width:7px;height:0.6999999999999886px;background:#5e5e5e;border-radius:0;'></div>
<svg class='a' style='left:862.7px;top:63.56px' width='5' height='4' viewBox='0 0 5 4'><path d='M0.3 0.3 L4.7 0.3 L2.5 3.7 Z' fill='#ccc'/></svg>
<svg class='a' style='left:872.7px;top:61.06px' width='8' height='9' viewBox='0 0 8 9'><path d='M4 0.6 A3 3 0 0 1 6 5.6 L5.6 6.6 H2.4 L2 5.6 A3 3 0 0 1 4 0.6 Z M2.8 7.4 H5.2 M3.2 8.4 H4.8' fill='#e8944a' stroke='#e8944a' stroke-width='0.6'/><path d='M3 3 L4 4.4 L5 3' stroke='#2a2a2a' stroke-width='0.5' fill='none'/></svg>
<div class='t' style='left:884.7px;top:64.00px;color:#d8d8d8;'>Lamp</div>
<svg class='a' style='left:985.9px;top:62.56px' width='9' height='6' viewBox='0 0 9 6'><path d='M0.5 3 Q4.5 -1.4 8.5 3 Q4.5 7.4 0.5 3 Z' fill='none' stroke='#ddd' stroke-width='0.8'/><circle cx='4.5' cy='3' r='1.5' fill='#ddd'/></svg>
<svg class='a' style='left:883.8px;top:72.48px' width='8' height='9' viewBox='0 0 8 9'><circle cx='4' cy='3.8' r='3.1' fill='none' stroke='#20b58a' stroke-width='0.75'/><path d='M4 2.6 V5 M4 7 V8.4' stroke='#20b58a' stroke-width='0.8'/></svg>
<div class='t' style='left:896px;top:75.00px;color:#d8d8d8;'>Lamp</div>
<svg class='a' style='left:850.8px;top:86.4px' width='5' height='4' viewBox='0 0 5 4'><path d='M0.3 0.3 L4.7 0.3 L2.5 3.7 Z' fill='#999'/></svg>
<div class='a' style='left:861.9px;top:85.2px;width:6.399999999999977px;height:6.400000000000006px;background:#e6e6e6;border-radius:1px;'></div>
<svg class='a' style='left:861.9px;top:85.2px' width='6.4' height='6.4' viewBox='0 0 6.4 6.4'><path d='M1.3 3.3 L2.7 4.7 L5.2 1.6' stroke='#222' stroke-width='1' fill='none'/></svg>
<svg class='a' style='left:872.4px;top:84.2px' width='8' height='8.4' viewBox='0 0 8 8.4'><path d='M0.6 0.6 H7.4 V1.9 H0.6 Z' fill='none' stroke='#8a8a8a' stroke-width='0.7'/><rect x='1.1' y='2.3' width='5.8' height='5.4' fill='none' stroke='#8a8a8a' stroke-width='0.7'/><rect x='3' y='4' width='2' height='1.5' fill='#8a8a8a'/></svg>
<div class='t' style='left:884.6px;top:86.00px;color:#7a7a7a;'>Collection 10</div>
<svg class='a' style='left:986px;top:86.4px' width='9' height='4' viewBox='0 0 9 4'><path d='M1 0.8 Q4.5 4.6 8 0.8' stroke='#5a5a5a' stroke-width='0.7' fill='none'/></svg>
<svg class='a' style='left:862.3px;top:97.82px' width='5' height='4' viewBox='0 0 5 4'><path d='M0.3 0.3 L4.7 0.3 L2.5 3.7 Z' fill='#777'/></svg>
<div class='a' style='left:873.7px;top:96.61999999999999px;width:6.399999999999977px;height:6.400000000000006px;background:#e6e6e6;border-radius:1px;'></div>
<svg class='a' style='left:873.7px;top:96.61999999999999px' width='6.4' height='6.4' viewBox='0 0 6.4 6.4'><path d='M1.3 3.3 L2.7 4.7 L5.2 1.6' stroke='#222' stroke-width='1' fill='none'/></svg>
<svg class='a' style='left:884px;top:95.61999999999999px' width='8' height='8.4' viewBox='0 0 8 8.4'><path d='M0.6 0.6 H7.4 V1.9 H0.6 Z' fill='none' stroke='#8a8a8a' stroke-width='0.7'/><rect x='1.1' y='2.3' width='5.8' height='5.4' fill='none' stroke='#8a8a8a' stroke-width='0.7'/><rect x='3' y='4' width='2' height='1.5' fill='#8a8a8a'/></svg>
<div class='t' style='left:896px;top:98.00px;color:#7a7a7a;'>Widgets</div>
<svg class='a' style='left:985.9px;top:96.82px' width='9' height='6' viewBox='0 0 9 6'><path d='M0.5 3 Q4.5 -1.4 8.5 3 Q4.5 7.4 0.5 3 Z' fill='none' stroke='#858585' stroke-width='0.8'/><circle cx='4.5' cy='3' r='1.5' fill='#858585'/></svg>
<div class='a' style='left:876.6px;top:110.89px;width:7.399999999999977px;height:0.6999999999999886px;background:#5e5e5e;border-radius:0;'></div>
<svg class='a' style='left:875px;top:108.74px' width='4' height='5' viewBox='0 0 4 5'><path d='M0.3 0.3 L3.7 2.5 L0.3 4.7 Z' fill='#ccc'/></svg>
<svg class='a' style='left:883.7px;top:107.03999999999999px' width='9' height='8.4' viewBox='0 0 9 8.4'><path d='M1 1 H8 L4.5 7.4 Z' fill='none' stroke='#e8944a' stroke-width='1.3' stroke-linejoin='round'/></svg>
<div class='t' style='left:896px;top:109.00px;color:#d8d8d8;'>WGTS_zara_rig</div>
<svg class='a' style='left:953.9px;top:106.83999999999999px' width='9' height='8.8' viewBox='0 0 9 8.8'><path d='M1.5 1.6 H7.5 L4.5 7.2 Z' fill='none' stroke='#20b58a' stroke-width='0.8'/><circle cx='1.5' cy='1.6' r='1.1' fill='#20b58a'/><circle cx='7.5' cy='1.6' r='1.1' fill='#20b58a'/><circle cx='4.5' cy='7.2' r='1.1' fill='#20b58a'/></svg>
<svg class='a' style='left:965.5px;top:106.63999999999999px' width='9' height='8.4' viewBox='0 0 9 8.4'><path d='M1 1 H8 L4.5 7.4 Z' fill='none' stroke='#e8944a' stroke-width='1.3' stroke-linejoin='round'/></svg>
<svg class='a' style='left:985.9px;top:108.24px' width='9' height='6' viewBox='0 0 9 6'><path d='M0.5 3 Q4.5 -1.4 8.5 3 Q4.5 7.4 0.5 3 Z' fill='none' stroke='#858585' stroke-width='0.8'/><circle cx='4.5' cy='3' r='1.5' fill='#858585'/></svg>
<svg class='a' style='left:971.5px;top:111.74px' width='8' height='5' viewBox='0 0 8 5'><ellipse cx='3' cy='2.6' rx='1.3' ry='1.7' fill='#111' stroke='#ddd' stroke-width='0.5'/><ellipse cx='5.6' cy='2.6' rx='1.3' ry='1.7' fill='#111' stroke='#ddd' stroke-width='0.5'/></svg>
<div class='a' style='left:865px;top:122.31px;width:7px;height:0.6999999999999886px;background:#5e5e5e;border-radius:0;'></div>
<svg class='a' style='left:863.4px;top:120.16px' width='4' height='5' viewBox='0 0 4 5'><path d='M0.3 0.3 L3.7 2.5 L0.3 4.7 Z' fill='#ccc'/></svg>
<svg class='a' style='left:871.9px;top:118.16px' width='9' height='9' viewBox='0 0 9 9'><circle cx='4.5' cy='1.6' r='1.1' fill='#e8944a'/><path d='M0.8 2.6 L4.5 3.8 L8.2 2.6 M4.5 3.4 V5.4 L2.4 8.4 M4.5 5.4 L6.6 8.4' stroke='#e8944a' stroke-width='1' fill='none'/></svg>
<div class='t' style='left:884.6px;top:121.00px;color:#d8d8d8;'>metarig.001</div>
<svg class='a' style='left:932.5px;top:118.16px' width='9' height='9' viewBox='0 0 9 9'><circle cx='4.8' cy='1.4' r='0.9' fill='#20b58a'/><path d='M1.4 1.6 L4.2 3.2 L7.8 2 M4.4 3 L4 5.4 L1.6 8.2 M4 5.4 L6.4 6.4 L7 8.4' stroke='#20b58a' stroke-width='0.8' fill='none'/></svg>
<svg class='a' style='left:943.9px;top:118.16px' width='9' height='9' viewBox='0 0 9 9'><circle cx='4.8' cy='1.4' r='0.9' fill='#20b58a'/><path d='M1.4 1.6 L4.2 3.2 L7.8 2 M4.4 3 L4 5.4 L1.6 8.2 M4 5.4 L6.4 6.4 L7 8.4' stroke='#20b58a' stroke-width='0.8' fill='none'/></svg>
<svg class='a' style='left:985.9px;top:119.66px' width='9' height='6' viewBox='0 0 9 6'><path d='M0.5 3 Q4.5 -1.4 8.5 3 Q4.5 7.4 0.5 3 Z' fill='none' stroke='#858585' stroke-width='0.8'/><circle cx='4.5' cy='3' r='1.5' fill='#858585'/></svg>
<svg class='a' style='left:850.8px;top:132.08px' width='5' height='4' viewBox='0 0 5 4'><path d='M0.3 0.3 L4.7 0.3 L2.5 3.7 Z' fill='#ccc'/></svg>
<div class='a' style='left:861.9px;top:130.88000000000002px;width:6.399999999999977px;height:6.399999999999977px;background:#e6e6e6;border-radius:1px;'></div>
<svg class='a' style='left:861.9px;top:130.88000000000002px' width='6.4' height='6.4' viewBox='0 0 6.4 6.4'><path d='M1.3 3.3 L2.7 4.7 L5.2 1.6' stroke='#222' stroke-width='1' fill='none'/></svg>
<svg class='a' style='left:872.4px;top:129.88000000000002px' width='8' height='8.4' viewBox='0 0 8 8.4'><path d='M0.6 0.6 H7.4 V1.9 H0.6 Z' fill='none' stroke='#ddd' stroke-width='0.7'/><rect x='1.1' y='2.3' width='5.8' height='5.4' fill='none' stroke='#ddd' stroke-width='0.7'/><rect x='3' y='4' width='2' height='1.5' fill='#ddd'/></svg>
<div class='t' style='left:884.6px;top:132.00px;color:#d8d8d8;'>zara</div>
<svg class='a' style='left:985.9px;top:131.08px' width='9' height='6' viewBox='0 0 9 6'><path d='M0.5 3 Q4.5 -1.4 8.5 3 Q4.5 7.4 0.5 3 Z' fill='none' stroke='#ddd' stroke-width='0.8'/><circle cx='4.5' cy='3' r='1.5' fill='#ddd'/></svg>
<svg class='a' style='left:862.3px;top:143.5px' width='5' height='4' viewBox='0 0 5 4'><path d='M0.3 0.3 L4.7 0.3 L2.5 3.7 Z' fill='#ccc'/></svg>
<div class='a' style='left:873.7px;top:142.3px;width:6.399999999999977px;height:6.399999999999977px;background:#e6e6e6;border-radius:1px;'></div>
<svg class='a' style='left:873.7px;top:142.3px' width='6.4' height='6.4' viewBox='0 0 6.4 6.4'><path d='M1.3 3.3 L2.7 4.7 L5.2 1.6' stroke='#222' stroke-width='1' fill='none'/></svg>
<svg class='a' style='left:884px;top:141.3px' width='8' height='8.4' viewBox='0 0 8 8.4'><path d='M0.6 0.6 H7.4 V1.9 H0.6 Z' fill='none' stroke='#ddd' stroke-width='0.7'/><rect x='1.1' y='2.3' width='5.8' height='5.4' fill='none' stroke='#ddd' stroke-width='0.7'/><rect x='3' y='4' width='2' height='1.5' fill='#ddd'/></svg>
<div class='t' style='left:896px;top:144.00px;color:#d8d8d8;'>head</div>
<svg class='a' style='left:985.9px;top:142.5px' width='9' height='6' viewBox='0 0 9 6'><path d='M0.5 3 Q4.5 -1.4 8.5 3 Q4.5 7.4 0.5 3 Z' fill='none' stroke='#ddd' stroke-width='0.8'/><circle cx='4.5' cy='3' r='1.5' fill='#ddd'/></svg>
<div class='a' style='left:876.6px;top:156.57000000000002px;width:7.399999999999977px;height:0.6999999999999886px;background:#5e5e5e;border-radius:0;'></div>
<svg class='a' style='left:875px;top:154.42000000000002px' width='4' height='5' viewBox='0 0 4 5'><path d='M0.3 0.3 L3.7 2.5 L0.3 4.7 Z' fill='#ccc'/></svg>
<div class='a' style='left:882.6px;top:151.72000000000003px;width:11.0px;height:10.399999999999977px;background:#6a6a6a;border-radius:2px;'></div>
<svg class='a' style='left:883.7px;top:152.72000000000003px' width='9' height='8.4' viewBox='0 0 9 8.4'><path d='M1 1 H8 L4.5 7.4 Z' fill='none' stroke='#e8944a' stroke-width='1.3' stroke-linejoin='round'/></svg>
<div class='t' style='left:896px;top:155.00px;color:#d8d8d8;'>eye.L</div>
<svg class='a' style='left:924.3px;top:152.52px' width='9' height='8.8' viewBox='0 0 9 8.8'><path d='M1.5 1.6 H7.5 L4.5 7.2 Z' fill='none' stroke='#20b58a' stroke-width='0.8'/><circle cx='1.5' cy='1.6' r='1.1' fill='#20b58a'/><circle cx='7.5' cy='1.6' r='1.1' fill='#20b58a'/><circle cx='4.5' cy='7.2' r='1.1' fill='#20b58a'/></svg>
<svg class='a' style='left:985.9px;top:153.92000000000002px' width='9' height='6' viewBox='0 0 9 6'><path d='M0.5 3 Q4.5 -1.4 8.5 3 Q4.5 7.4 0.5 3 Z' fill='none' stroke='#ddd' stroke-width='0.8'/><circle cx='4.5' cy='3' r='1.5' fill='#ddd'/></svg>
<div class='a' style='left:876.6px;top:167.99px;width:7.399999999999977px;height:0.6999999999999886px;background:#5e5e5e;border-radius:0;'></div>
<svg class='a' style='left:875px;top:165.84px' width='4' height='5' viewBox='0 0 4 5'><path d='M0.3 0.3 L3.7 2.5 L0.3 4.7 Z' fill='#ccc'/></svg>
<svg class='a' style='left:883.7px;top:164.14000000000001px' width='9' height='8.4' viewBox='0 0 9 8.4'><path d='M1 1 H8 L4.5 7.4 Z' fill='none' stroke='#e8944a' stroke-width='1.3' stroke-linejoin='round'/></svg>
<div class='t' style='left:896px;top:166.00px;color:#d8d8d8;'>eye.R</div>
<svg class='a' style='left:925.3px;top:163.94px' width='9' height='8.8' viewBox='0 0 9 8.8'><path d='M1.5 1.6 H7.5 L4.5 7.2 Z' fill='none' stroke='#20b58a' stroke-width='0.8'/><circle cx='1.5' cy='1.6' r='1.1' fill='#20b58a'/><circle cx='7.5' cy='1.6' r='1.1' fill='#20b58a'/><circle cx='4.5' cy='7.2' r='1.1' fill='#20b58a'/></svg>
<svg class='a' style='left:985.9px;top:165.34px' width='9' height='6' viewBox='0 0 9 6'><path d='M0.5 3 Q4.5 -1.4 8.5 3 Q4.5 7.4 0.5 3 Z' fill='none' stroke='#ddd' stroke-width='0.8'/><circle cx='4.5' cy='3' r='1.5' fill='#ddd'/></svg>
<div class='a' style='left:836px;top:15px;width:164px;height:15px;background:#333333;border-radius:3px 3px 0 0;'></div>
<div class='a' style='left:841.6px;top:18.2px;width:16.399999999999977px;height:9.400000000000002px;background:#242424;border-radius:2px;'></div>
<svg class='a' style='left:843px;top:18.6px' width='9' height='9' viewBox='0 0 9 9'><rect x='0.8' y='0.8' width='2.6' height='2' fill='#ddd'/><rect x='3.6' y='3.6' width='4.4' height='1.8' fill='#ddd'/><rect x='3.6' y='6.4' width='4.4' height='1.8' fill='#ddd'/><path d='M2 2.8 V7.3 H3.6 M2 4.5 H3.6' stroke='#ddd' stroke-width='0.6' fill='none'/></svg>
<svg class='a' style='left:851px;top:20px' width='8' height='6' viewBox='0 0 8 6'><path d='M1.7999999999999998 1.9 L4 4.1 L6.2 1.9' stroke='#ccc' stroke-width='0.8' fill='none'/></svg>
<div class='a' style='left:862.3px;top:18.2px;width:17.0px;height:9.400000000000002px;background:#242424;border-radius:2px;'></div>
<svg class='a' style='left:863.8px;top:18.6px' width='9' height='9' viewBox='0 0 9 9'><path d='M2.6 2.4 V0.9 H8.1 V6 H6.4' fill='none' stroke='#aaa' stroke-width='0.7'/><rect x='0.9' y='2.6' width='5.4' height='5.4' fill='#777' stroke='#ccc' stroke-width='0.7'/><path d='M1.4 7.4 L3 5 L4.2 6.4 L4.8 5.8 L5.8 7.4 Z' fill='#ddd'/></svg>
<svg class='a' style='left:872px;top:20px' width='8' height='6' viewBox='0 0 8 6'><path d='M1.7999999999999998 1.9 L4 4.1 L6.2 1.9' stroke='#ccc' stroke-width='0.8' fill='none'/></svg>
<div class='a' style='left:888.7px;top:18.2px;width:63.39999999999998px;height:9.400000000000002px;background:#1d1d1d;border-radius:2px;'></div>
<svg class='a' style='left:890.6px;top:18.6px' width='9' height='9' viewBox='0 0 9 9'><circle cx='5.4' cy='3.6' r='2.4' fill='none' stroke='#ddd' stroke-width='0.8'/><path d='M3.6 5.4 L1 8' stroke='#ddd' stroke-width='1'/></svg>
<div class='a' style='left:964px;top:18.2px;width:17px;height:9.400000000000002px;background:#242424;border-radius:2px;'></div>
<svg class='a' style='left:965.4px;top:18.8px' width='9' height='9' viewBox='0 0 9 9'><path d='M0.8 1 H8 L5.2 4.4 V7.8 L3.6 6.8 V4.4 Z' fill='none' stroke='#ddd' stroke-width='0.75'/></svg>
<svg class='a' style='left:973.6px;top:20px' width='8' height='6' viewBox='0 0 8 6'><path d='M1.7999999999999998 1.9 L4 4.1 L6.2 1.9' stroke='#ccc' stroke-width='0.8' fill='none'/></svg>
<div class='a' style='left:984px;top:18.2px;width:11px;height:9.400000000000002px;background:#565656;border-radius:2px;'></div>
<svg class='a' style='left:985.2px;top:18.6px' width='9' height='9' viewBox='0 0 9 9'><path d='M1 2.6 H6 V8 H1 Z M1 4.2 H6' fill='none' stroke='#ccc' stroke-width='0.7'/><rect x='2.8' y='5.4' width='1.4' height='1' fill='#ccc'/><circle cx='6.8' cy='2' r='1.7' fill='#ddd'/><path d='M6.8 1 V3 M5.8 2 H7.8' stroke='#444' stroke-width='0.5'/></svg>
<svg class='a' style='left:828.8px;top:24.8px' width='5' height='7' viewBox='0 0 5 7'><path d='M3.6 1 L1.2 3.5 L3.6 6' stroke='#aaa' stroke-width='0.7' fill='none'/></svg>
<svg class='a' style='left:828.5px;top:512px' width='5' height='7' viewBox='0 0 5 7'><path d='M3.6 1 L1.2 3.5 L3.6 6' stroke='#aaa' stroke-width='0.7' fill='none'/></svg>
<svg class='a' style='left:0px;top:24px' width='4' height='7' viewBox='0 0 4 7'><path d='M0 1 L2.6 3.5 L0 6' stroke='#999' stroke-width='0.7' fill='none'/></svg>
<svg class='a' style='left:0px;top:512px' width='4' height='7' viewBox='0 0 4 7'><path d='M0 1 L2.6 3.5 L0 6' stroke='#999' stroke-width='0.7' fill='none'/></svg>
<div class='a' style='left:836px;top:174.8px;width:164px;height:362.2px;background:#424242;border-radius:3px;'></div>
<div class='a' style='left:836px;top:174.8px;width:164px;height:13.5px;background:#3b3b3b;border-radius:3px 3px 0 0;'></div>
<div class='a' style='left:836px;top:188.3px;width:16.5px;height:348.7px;background:#252525;border-radius:0 0 0 3px;'></div>
<div class='a' style='left:841.8px;top:176.5px;width:15.900000000000091px;height:10.0px;background:#2a2a2a;border-radius:2px;'></div>
<svg class='a' style='left:843.4px;top:177px' width='9' height='9' viewBox='0 0 9 9'><rect x='0.8' y='1' width='6.6' height='2.8' rx='1.4' fill='#e4e4e4'/><rect x='0.8' y='5' width='6.6' height='2.8' rx='1.4' fill='none' stroke='#e4e4e4' stroke-width='0.7'/><circle cx='2.4' cy='6.4' r='1' fill='#e4e4e4'/></svg>
<svg class='a' style='left:850.8px;top:178.6px' width='8' height='6' viewBox='0 0 8 6'><path d='M1.7999999999999998 1.9 L4 4.1 L6.2 1.9' stroke='#ccc' stroke-width='0.8' fill='none'/></svg>
<svg class='a' style='left:866px;top:177px' width='9' height='9' viewBox='0 0 9 9'><rect x='2.2' y='2.2' width='4.6' height='4.6' fill='#e8e8e8'/><path d='M0.8 2.4 V0.8 H2.4 M6.6 0.8 H8.2 V2.4 M8.2 6.6 V8.2 H6.6 M2.4 8.2 H0.8 V6.6' stroke='#ccc' stroke-width='0.7' fill='none'/></svg>
<div class='t' style='left:879.2px;top:179.00px;color:#d8d8d8;'>eye.L</div>
<svg class='a' style='left:985px;top:176.6px' width='9' height='9' viewBox='0 0 9 9'><path d='M5.2 1 L8 3.8 L6.6 4 L5 5.6 L5 7 L2 4 L3.4 4 L5 2.4 Z M3.4 5.6 L1 8' fill='none' stroke='#999' stroke-width='0.7'/></svg>
<div class='a' style='left:857.3px;top:193.3px;width:122.40000000000009px;height:42.69999999999999px;background:#333333;border-radius:2px;'></div>
<svg class='a' style='left:862.6px;top:229.2px' width='4' height='5' viewBox='0 0 4 5'><path d='M0.3 0.3 L3.7 2.5 L0.3 4.7 Z' fill='#bbb'/></svg>
<svg class='a' style='left:921px;top:230.4px' width='6' height='3' viewBox='0 0 6 3'><g fill='#666'><rect x='0' y='0' width='1' height='1'/><rect x='2' y='0' width='1' height='1'/><rect x='4' y='0' width='1' height='1'/><rect x='0' y='1.8' width='1' height='1'/><rect x='2' y='1.8' width='1' height='1'/><rect x='4' y='1.8' width='1' height='1'/></g></svg>
<div class='a' style='left:985.2px;top:193.3px;width:9.599999999999909px;height:10.399999999999977px;background:#595959;border-radius:2px 2px 0 0;'></div>
<div class='a' style='left:985.2px;top:204px;width:9.599999999999909px;height:10.5px;background:#595959;border-radius:0 0 2px 2px;'></div>
<svg class='a' style='left:986.5px;top:195px' width='7' height='7' viewBox='0 0 7 7'><path d='M3.5 0.8 V6.2 M0.8 3.5 H6.2' stroke='#a0a0a0' stroke-width='0.9'/></svg>
<svg class='a' style='left:986.5px;top:205.7px' width='7' height='7' viewBox='0 0 7 7'><path d='M1 3.5 H6' stroke='#a0a0a0' stroke-width='0.9'/></svg>
<div class='a' style='left:985.2px;top:218.3px;width:9.599999999999909px;height:10.299999999999983px;background:#2a2a2a;border-radius:2px;'></div>
<svg class='a' style='left:986px;top:220.6px' width='8' height='6' viewBox='0 0 8 6'><path d='M1.3599999999999999 1.68 L4 4.32 L6.640000000000001 1.68' stroke='#ccc' stroke-width='0.8' fill='none'/></svg>
<div class='a' style='left:837px;top:193.29999999999998px;width:15.5px;height:14.800000000000011px;background:#2e2e2e;border-radius:2.5px 0 0 2.5px;'></div>
<div class='a' style='left:837px;top:212.1px;width:15.5px;height:14.800000000000011px;background:#2e2e2e;border-radius:2.5px 0 0 2.5px;'></div>
<div class='a' style='left:837px;top:227.7px;width:15.5px;height:14.800000000000011px;background:#2e2e2e;border-radius:2.5px 0 0 2.5px;'></div>
<div class='a' style='left:837px;top:243.4px;width:15.5px;height:14.799999999999983px;background:#2e2e2e;border-radius:2.5px 0 0 2.5px;'></div>
<div class='a' style='left:837px;top:259.0px;width:15.5px;height:14.799999999999955px;background:#2e2e2e;border-radius:2.5px 0 0 2.5px;'></div>
<div class='a' style='left:837px;top:274.70000000000005px;width:15.5px;height:14.799999999999955px;background:#2e2e2e;border-radius:2.5px 0 0 2.5px;'></div>
<div class='a' style='left:837px;top:294.8px;width:15.5px;height:14.799999999999955px;background:#2e2e2e;border-radius:2.5px 0 0 2.5px;'></div>
<div class='a' style='left:837px;top:310.5px;width:15.5px;height:14.799999999999955px;background:#2e2e2e;border-radius:2.5px 0 0 2.5px;'></div>
<div class='a' style='left:837px;top:326.1px;width:15.5px;height:14.799999999999955px;background:#474747;border-radius:2.5px 0 0 2.5px;'></div>
<div class='a' style='left:837px;top:341.70000000000005px;width:15.5px;height:14.799999999999955px;background:#2e2e2e;border-radius:2.5px 0 0 2.5px;'></div>
<div class='a' style='left:837px;top:357.40000000000003px;width:15.5px;height:14.799999999999955px;background:#2e2e2e;border-radius:2.5px 0 0 2.5px;'></div>
<div class='a' style='left:837px;top:373.0px;width:15.5px;height:14.799999999999955px;background:#2e2e2e;border-radius:2.5px 0 0 2.5px;'></div>
<div class='a' style='left:837px;top:388.6px;width:15.5px;height:14.799999999999955px;background:#2e2e2e;border-radius:2.5px 0 0 2.5px;'></div>
<div class='a' style='left:837px;top:408.6px;width:15.5px;height:14.799999999999955px;background:#2e2e2e;border-radius:2.5px 0 0 2.5px;'></div>
<svg class='a' style='left:841.1px;top:196.2px' width='9' height='9' viewBox='0 0 9 9'><path d='M2 0.8 V4.4 M1 4.6 H3 V7.6 Q2 8.6 1 7.6 Z' stroke='#ddd' stroke-width='0.8' fill='#ddd'/><path d='M5 0.8 V2.6 Q6.4 4 7.8 2.6 V0.8 M6.4 3.4 V8.2' stroke='#ddd' stroke-width='0.9' fill='none'/></svg>
<svg class='a' style='left:841.1px;top:215.0px' width='9' height='9' viewBox='0 0 9 9'><rect x='0.9' y='3' width='6.4' height='4.8' fill='none' stroke='#ddd' stroke-width='0.9'/><path d='M2.2 3 V1.6 H4.2 V3 Z' fill='#ddd'/><path d='M7.4 4 L8.6 3.2 V4.8 Z' fill='#ddd'/><path d='M6 1.2 L7.2 2.8' stroke='#ddd' stroke-width='0.7'/></svg>
<svg class='a' style='left:841.1px;top:230.6px' width='9' height='9' viewBox='0 0 9 9'><rect x='1' y='0.8' width='7' height='2.2' fill='#ddd'/><path d='M1 3.8 H8 V6.4 H6.8 V5 H2.2 V6.4 H1 Z' fill='#ddd'/><rect x='2.6' y='5.6' width='3.8' height='2.6' fill='none' stroke='#ddd' stroke-width='0.6'/></svg>
<svg class='a' style='left:841.1px;top:246.3px' width='9' height='9' viewBox='0 0 9 9'><path d='M0.8 3.4 V8.2 H5.6' fill='none' stroke='#aaa' stroke-width='0.8'/><rect x='2.2' y='0.8' width='6' height='6' fill='#8a8a8a' stroke='#ddd' stroke-width='0.7'/><path d='M2.8 6.2 L4.4 3.8 L5.4 5 L6.2 4.2 L7.6 6.2 Z' fill='#eee'/></svg>
<svg class='a' style='left:841.1px;top:261.9px' width='9' height='9' viewBox='0 0 9 9'><path d='M0.8 7.8 L2.6 2.4 L4 5 L4.8 3.8 L5.6 7.8 Z' fill='#ddd'/><circle cx='6.6' cy='2' r='1.3' fill='#ddd'/><circle cx='6.2' cy='6.4' r='1.7' fill='none' stroke='#ddd' stroke-width='0.6'/></svg>
<svg class='a' style='left:841.1px;top:277.6px' width='9' height='9' viewBox='0 0 9 9'><circle cx='4.5' cy='4.5' r='3.6' fill='#5a3034' stroke='#e0606a' stroke-width='0.9'/><path d='M2 2.4 Q4 4 3 6 Q4.4 6.6 4.2 8 M5.4 1.2 Q5 3 7 3.6 Q6.4 5 7.8 5.6' stroke='#e0606a' stroke-width='0.8' fill='none'/></svg>
<svg class='a' style='left:841.1px;top:297.7px' width='9' height='9' viewBox='0 0 9 9'><rect x='2.2' y='2.2' width='4.6' height='4.6' fill='#e8944a'/><path d='M0.8 2.4 V0.8 H2.4 M6.6 0.8 H8.2 V2.4 M8.2 6.6 V8.2 H6.6 M2.4 8.2 H0.8 V6.6' stroke='#e8944a' stroke-width='0.7' fill='none'/></svg>
<svg class='a' style='left:841.1px;top:313.4px' width='9' height='9' viewBox='0 0 9 9'><path d='M1.6 7.6 L5 4.2' stroke='#7fa6e0' stroke-width='1.6' stroke-linecap='round'/><path d='M7.9 2.2 A2.3 2.3 0 1 1 5.9 0.9 L5 2.6 L6.6 3.6 Z' fill='#7fa6e0'/></svg>
<svg class='a' style='left:841.1px;top:329.0px' width='9' height='9' viewBox='0 0 9 9'><path d='M1.6 1.6 L7.4 2.4 M1.6 1.6 L6.6 7 M1.6 1.6 L2 7.4' stroke='#a0b4e0' stroke-width='0.7'/><circle cx='1.6' cy='1.6' r='1.2' fill='#a0b4e0'/><circle cx='7.4' cy='2.4' r='0.9' fill='#a0b4e0'/><circle cx='6.6' cy='7' r='0.9' fill='#a0b4e0'/><circle cx='2' cy='7.4' r='0.9' fill='#a0b4e0'/></svg>
<svg class='a' style='left:841.1px;top:344.6px' width='9' height='9' viewBox='0 0 9 9'><path d='M7.2 6.2 A3.3 3.3 0 1 1 6.4 2' fill='none' stroke='#7fa6e0' stroke-width='0.9'/><circle cx='4.4' cy='4.6' r='1.3' fill='#7fa6e0'/><circle cx='7.4' cy='1.6' r='0.8' fill='#7fa6e0'/></svg>
<svg class='a' style='left:841.1px;top:360.3px' width='9' height='9' viewBox='0 0 9 9'><circle cx='3.4' cy='5.4' r='2.6' fill='none' stroke='#7fa6e0' stroke-width='1'/><circle cx='3.4' cy='5.4' r='0.9' fill='#7fa6e0'/><path d='M4 2.6 Q6.6 0.4 7.8 2 Q8.6 3.4 6.2 5.6' stroke='#7fa6e0' stroke-width='1' fill='none'/></svg>
<svg class='a' style='left:841.1px;top:375.9px' width='9' height='9' viewBox='0 0 9 9'><path d='M1.5 1.8 H7.5 L4.5 7.4 Z' fill='none' stroke='#2fbf7a' stroke-width='0.8'/><circle cx='1.5' cy='1.8' r='1.1' fill='#2fbf7a'/><circle cx='7.5' cy='1.8' r='1.1' fill='#2fbf7a'/><circle cx='4.5' cy='7.4' r='1.1' fill='#2fbf7a'/></svg>
<svg class='a' style='left:841.1px;top:391.5px' width='9' height='9' viewBox='0 0 9 9'><circle cx='4.5' cy='4.5' r='3.6' fill='#e0606a'/><path d='M4.5 4.5 L4.5 0.9 A3.6 3.6 0 0 1 8.1 4.5 Z' fill='#3a2a2c'/><path d='M4.5 4.5 L0.9 4.5 A3.6 3.6 0 0 0 4.5 8.1 Z' fill='#3a2a2c'/><circle cx='4.5' cy='4.5' r='3.6' fill='none' stroke='#e0606a' stroke-width='0.7'/></svg>
<svg class='a' style='left:841.1px;top:411.5px' width='9' height='9' viewBox='0 0 9 9'><rect x='0.9' y='0.9' width='1.8' height='1.8' fill='#e0606a'/><rect x='0.9' y='2.7' width='1.8' height='1.8' fill='#f4c6ca'/><rect x='0.9' y='4.5' width='1.8' height='1.8' fill='#e0606a'/><rect x='0.9' y='6.300000000000001' width='1.8' height='1.8' fill='#f4c6ca'/><rect x='2.7' y='0.9' width='1.8' height='1.8' fill='#f4c6ca'/><rect x='2.7' y='2.7' width='1.8' height='1.8' fill='#e0606a'/><rect x='2.7' y='4.5' width='1.8' height='1.8' fill='#f4c6ca'/><rect x='2.7' y='6.300000000000001' width='1.8' height='1.8' fill='#e0606a'/><rect x='4.5' y='0.9' width='1.8' height='1.8' fill='#e0606a'/><rect x='4.5' y='2.7' width='1.8' height='1.8' fill='#f4c6ca'/><rect x='4.5' y='4.5' width='1.8' height='1.8' fill='#e0606a'/><rect x='4.5' y='6.300000000000001' width='1.8' height='1.8' fill='#f4c6ca'/><rect x='6.300000000000001' y='0.9' width='1.8' height='1.8' fill='#f4c6ca'/><rect x='6.300000000000001' y='2.7' width='1.8' height='1.8' fill='#e0606a'/><rect x='6.300000000000001' y='4.5' width='1.8' height='1.8' fill='#f4c6ca'/><rect x='6.300000000000001' y='6.300000000000001' width='1.8' height='1.8' fill='#e0606a'/></svg>
<svg class='a' style='left:900px;top:405px' width='80' height='125' viewBox='0 0 80 125'><defs><linearGradient id='gi' x1='0' y1='0' x2='0' y2='1'><stop offset='0.1' stop-color='#2230a0'/><stop offset='1' stop-color='#35288a'/></linearGradient><linearGradient id='gf' x1='0' y1='0' x2='0' y2='1'><stop offset='0.1' stop-color='#c8b028'/><stop offset='0.55' stop-color='#cf8226'/><stop offset='0.95' stop-color='#c2342a'/></linearGradient></defs><text x='40' y='55' text-anchor='middle' font-family='"Liberation Serif","Noto Serif CJK SC",serif' font-size='56' font-weight='300' transform='translate(40 0) scale(0.94 1) translate(-40 0)' fill='url(#gi)' opacity='0.92'>氷</text><text x='38' y='112' text-anchor='middle' font-family='"Liberation Serif","Noto Serif CJK SC",serif' font-size='54' font-weight='300' transform='translate(62 0) scale(0.95 1) translate(-62 0)' fill='url(#gf)'>火</text></svg></body></html>
